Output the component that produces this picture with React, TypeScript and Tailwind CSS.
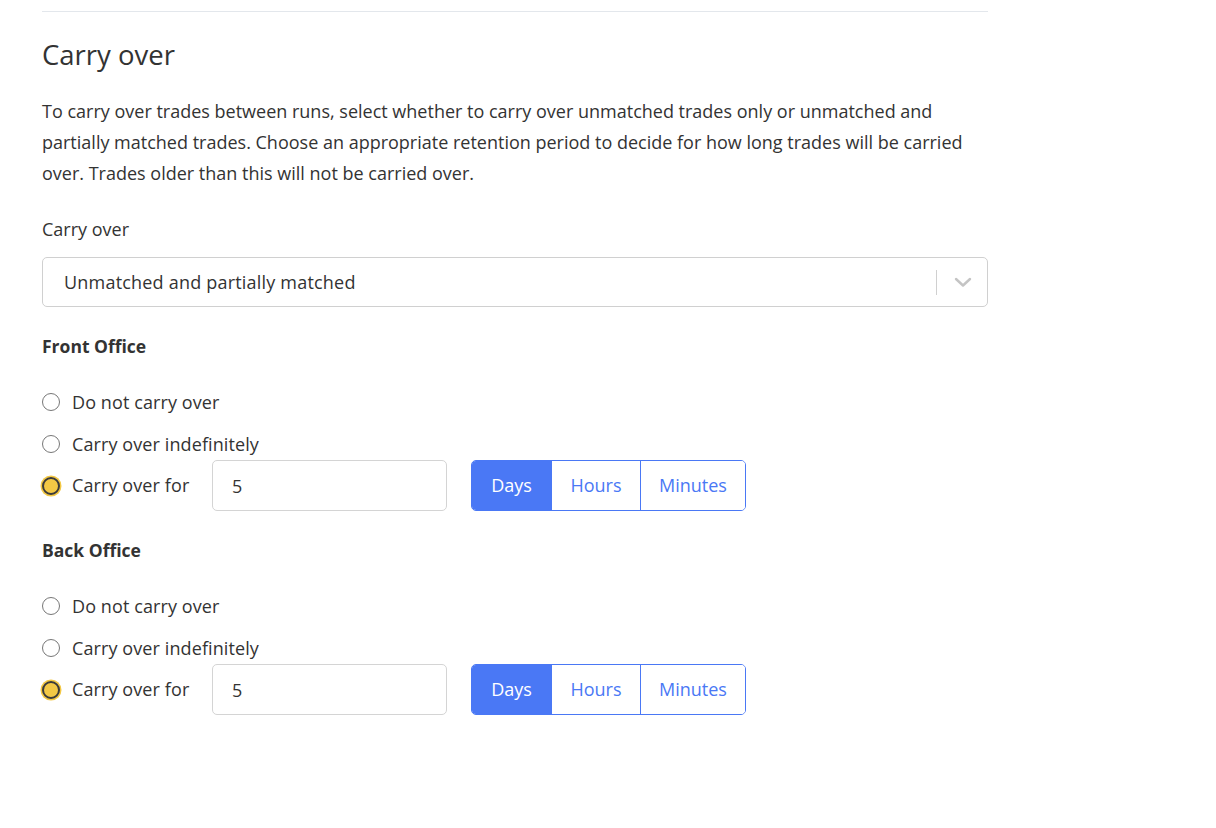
import { useState } from 'react'

type Unit = 'Days' | 'Hours' | 'Minutes'
type Mode = 'none' | 'forever' | 'for'

const Radio = ({ checked, label, onClick }: { checked: boolean; label: string; onClick: () => void }) => (
  <button type="button" onClick={onClick} className="flex items-center gap-[12px] text-left">
    <span
      className={
        checked
          ? 'w-[18px] h-[18px] rounded-full bg-[#f3c845] border-[2.5px] border-[#3b3b3b] shadow-[0_0_0_1.5px_#f3c845]'
          : 'w-[18px] h-[18px] rounded-full bg-white border-[1.5px] border-[#777]'
      }
    />
    <span className="text-[18px] tracking-[0.1px] text-[#333]">{label}</span>
  </button>
)

const OfficeBlock = ({ title }: { title: string }) => {
  const [mode, setMode] = useState<Mode>('for')
  const [unit, setUnit] = useState<Unit>('Days')
  const [value, setValue] = useState('5')

  return (
    <section>
      <h3 className="text-[17.5px] font-bold text-[#333] leading-[22px]">{title}</h3>
      <div className="mt-[24px] flex flex-col">
        <div className="h-[42px] flex items-center">
          <Radio checked={mode === 'none'} label="Do not carry over" onClick={() => setMode('none')} />
        </div>
        <div className="h-[42px] flex items-center">
          <Radio checked={mode === 'forever'} label="Carry over indefinitely" onClick={() => setMode('forever')} />
        </div>
        <div className="-mt-[5px] flex items-center">
          <div className="w-[170px]">
            <Radio checked={mode === 'for'} label="Carry over for" onClick={() => setMode('for')} />
          </div>
          <input
            value={value}
            onChange={(e) => setValue(e.target.value)}
            className="w-[235px] h-[51px] rounded-[5px] border border-[#d4d4d4] px-[19px] text-[18px] text-[#333] outline-none"
          />
          <div className="ml-[24px] flex h-[51px] rounded-[5px] border border-[#4a78f5] overflow-hidden">
            {(['Days', 'Hours', 'Minutes'] as Unit[]).map((u, i) => (
              <button
                key={u}
                type="button"
                onClick={() => setUnit(u)}
                className={
                  (unit === u ? 'bg-[#4a78f5] text-white ' : 'bg-white text-[#4a78f5] ') +
                  (i > 0 ? 'border-l border-[#4a78f5] ' : '') +
                  (u === 'Days' ? 'w-[79px] ' : u === 'Hours' ? 'w-[89px] ' : 'w-[105px] ') +
                  'text-[18px]'
                }
              >
                {u}
              </button>
            ))}
          </div>
        </div>
      </div>
    </section>
  )
}

export default function App() {
  return (
    <div className="min-h-screen bg-white" style={{ fontFamily: '"Open Sans", "Liberation Sans", sans-serif' }}>
      <div className="w-[946px] ml-[42px] pt-[11px]">
        <div className="h-px bg-[#e3e7ec]" />
        <h2 className="mt-[25px] text-[27.5px] text-[#333] leading-[36px]">Carry over</h2>
        <p className="mt-[23px] text-[18px] leading-[31px] text-[#333]">
          To carry over trades between runs, select whether to carry over unmatched trades only or unmatched and
          partially matched trades. Choose an appropriate retention period to decide for how long trades will be carried
          over. Trades older than this will not be carried over.
        </p>

        <label className="block mt-[29px] text-[18px] text-[#333] leading-[22px]">Carry over</label>
        <div className="mt-[17px] h-[50px] rounded-[5px] border border-[#d0d0d0] flex items-center pl-[21px] pr-[14px]">
          <span className="flex-1 text-[18px] tracking-[0.2px] text-[#333]">Unmatched and partially matched</span>
          <span className="w-px h-[25px] bg-[#d0d0d0]" />
          <svg className="ml-[16px]" width="20" height="20" viewBox="0 0 20 20" fill="none">
            <path d="M3 7l7 6.5L17 7" stroke="#c4c4c4" strokeWidth="2.4" strokeLinecap="round" strokeLinejoin="round" />
          </svg>
        </div>

        <div className="mt-[28px]">
          <OfficeBlock title="Front Office" />
        </div>
        <div className="mt-[28px]">
          <OfficeBlock title="Back Office" />
        </div>
      </div>
    </div>
  )
}
